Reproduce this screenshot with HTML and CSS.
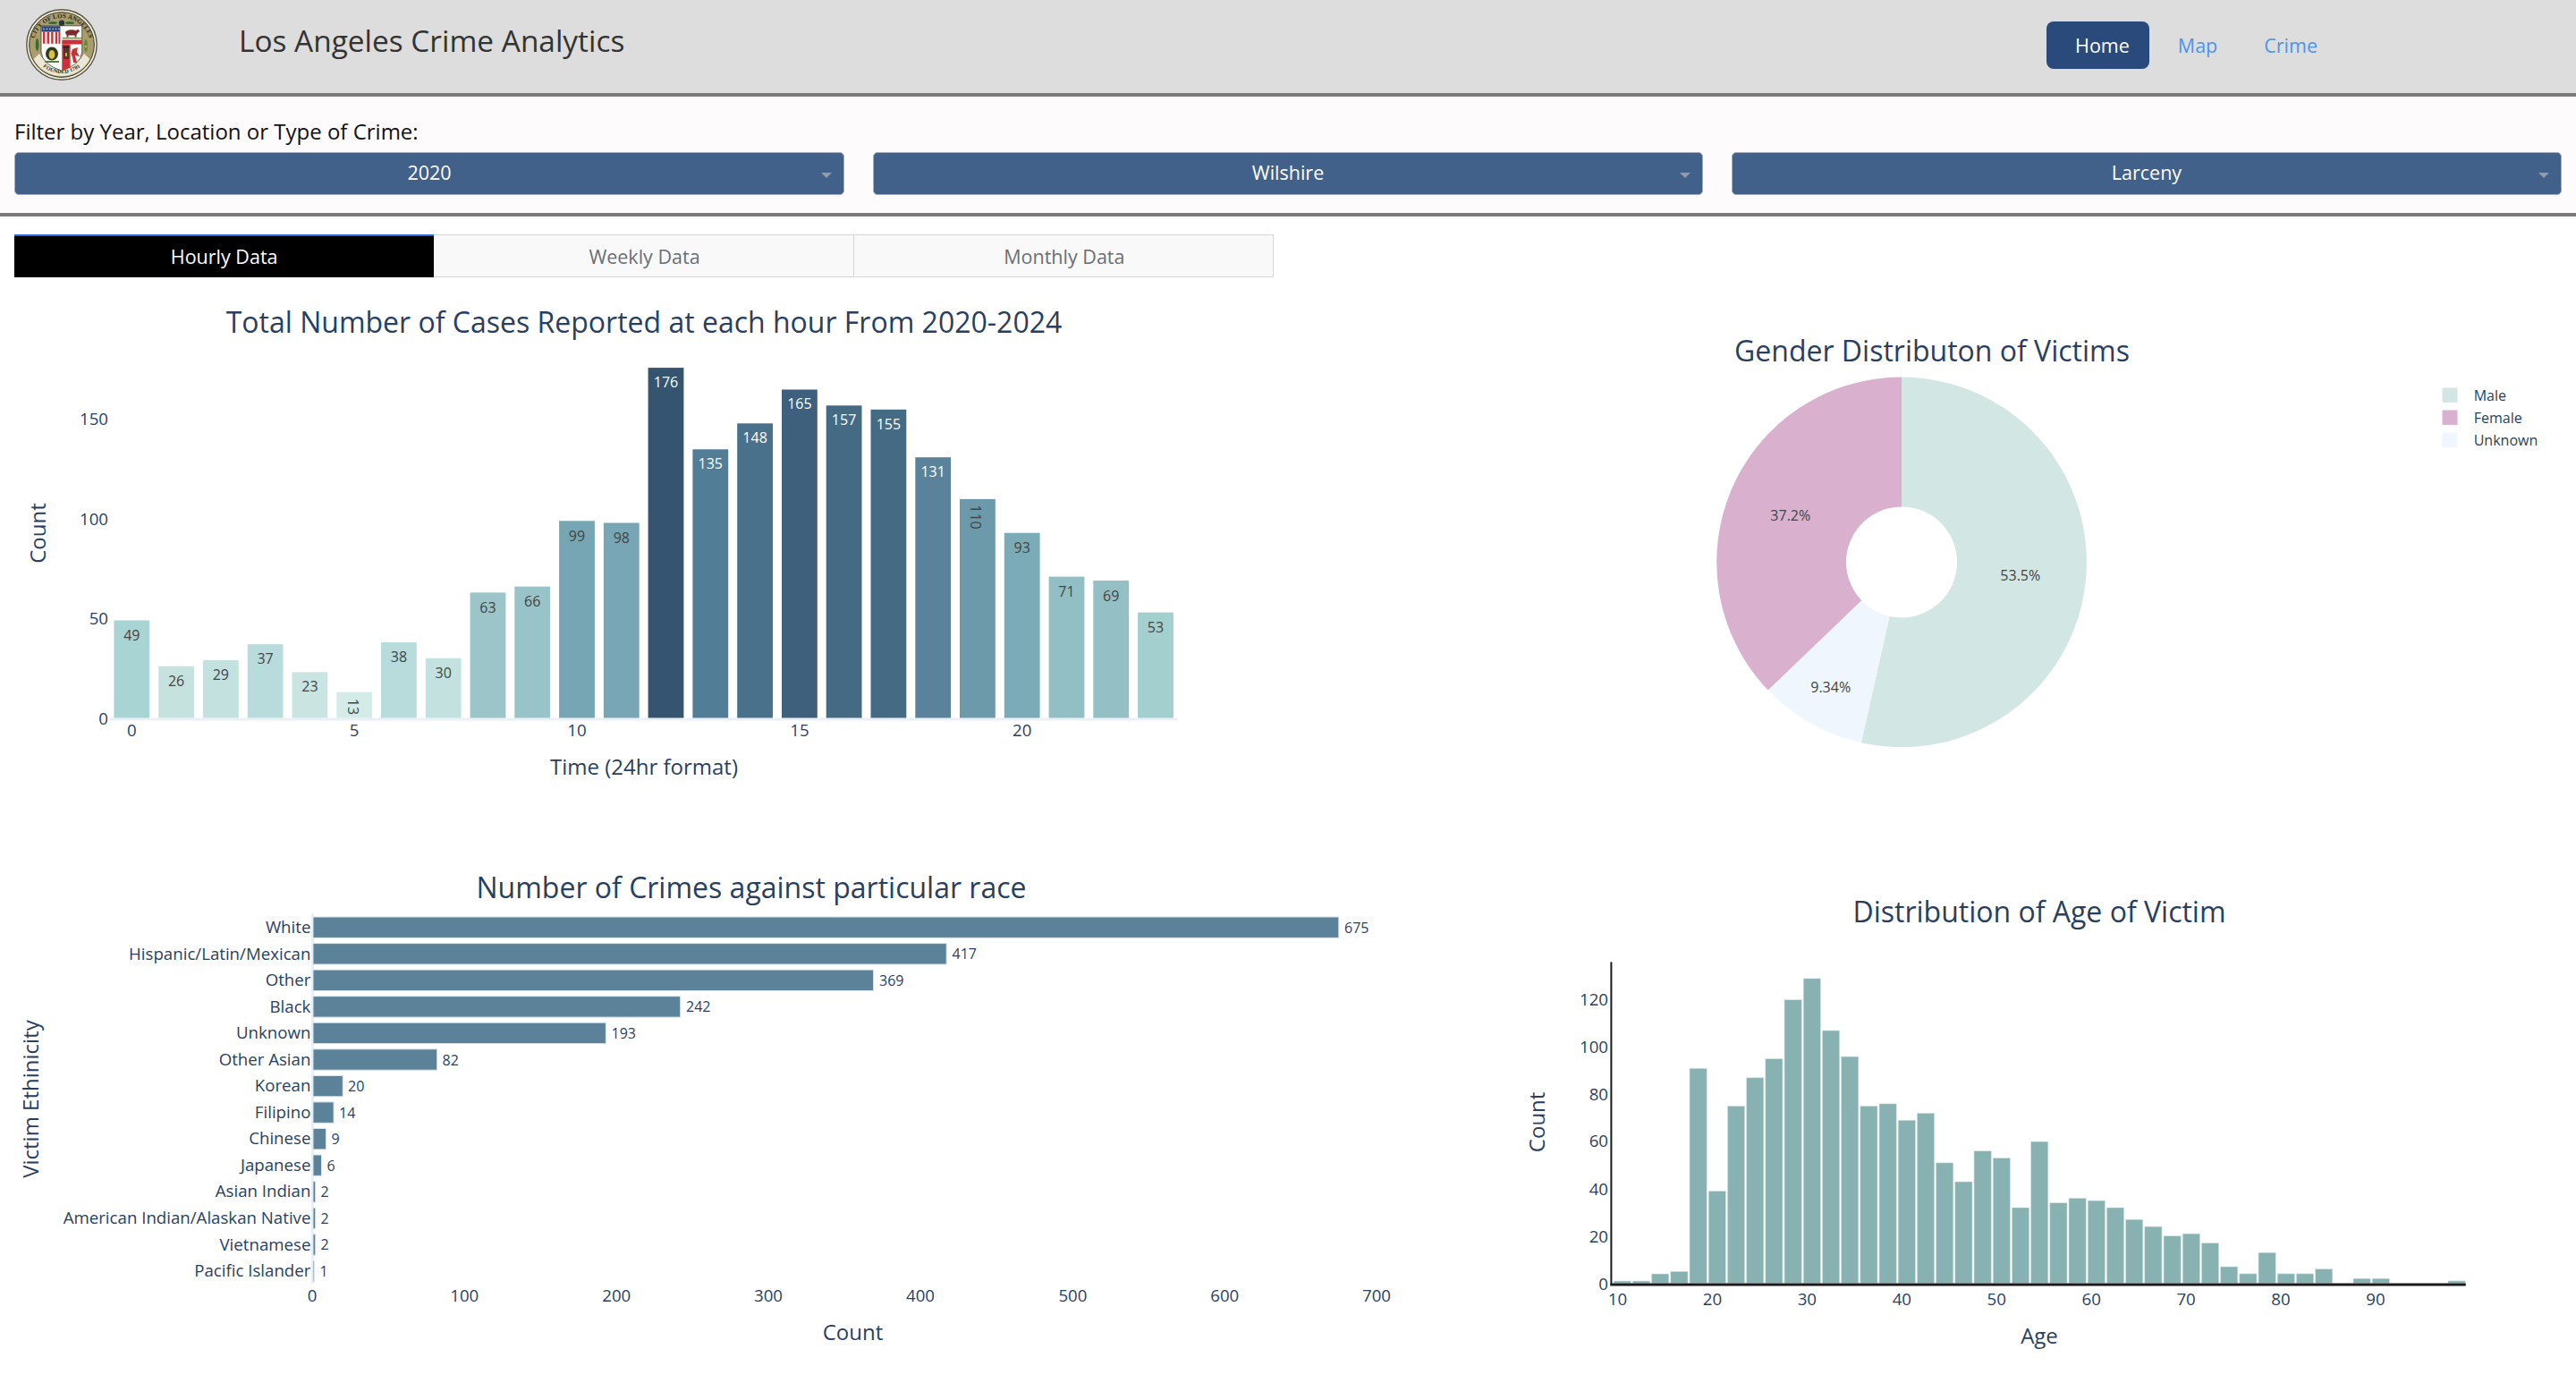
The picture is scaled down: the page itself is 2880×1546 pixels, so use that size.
FILE: index.html
```html
<!DOCTYPE html>
<html lang="en">
<head>
<meta charset="utf-8">
<title>Los Angeles Crime Analytics</title>
<link rel="stylesheet" href="styles.css">
</head>
<body>
<header class="topbar">
  <svg class="seal" viewBox="0 0 80 80" role="img" aria-label="Seal of the City of Los Angeles">
    <defs>
      <path id="seal-top" d="M8 42 A32 32 0 0 1 72 42"/>
      <path id="seal-bottom" d="M13 58 A33 33 0 0 0 67 58"/>
    </defs>
    <circle cx="40" cy="40" r="39.2" fill="#f4f1e6" stroke="#5c5740" stroke-width="1.4"/>
    <circle cx="40" cy="40" r="36.4" fill="#a99c6d" stroke="#3d3a2b" stroke-width="1"/>
    <text class="seal-text"><textPath href="#seal-top" startOffset="50%" text-anchor="middle">CITY OF LOS ANGELES</textPath></text>
    <path d="M8.5 56 A35.6 35.6 0 0 0 71.5 56 L65 50 A28 28 0 0 1 15 50 Z" fill="#ece7d4"/>
    <text class="seal-text seal-small"><textPath href="#seal-bottom" startOffset="50%" text-anchor="middle">FOUNDED 1781</textPath></text>
    <path d="M17 18.8 H62.7 V48 Q62 62 39.8 69 Q18 62 17 48 Z" fill="#fbfbf8" stroke="#2c2c24" stroke-width=".7"/>
    <rect x="17.4" y="19.2" width="21" height="6.4" fill="#2e4a86"/>
    <g fill="#c8323a">
      <rect x="19" y="25.6" width="2.4" height="13.2"/><rect x="23.6" y="25.6" width="2.4" height="13.2"/><rect x="28.2" y="25.6" width="2.4" height="13.2"/><rect x="32.8" y="25.6" width="2.4" height="13.2"/><rect x="36.4" y="25.6" width="2" height="13.2"/>
    </g>
    <g fill="#fff"><circle cx="20" cy="22.4" r=".7"/><circle cx="23.4" cy="22.4" r=".7"/><circle cx="26.8" cy="22.4" r=".7"/><circle cx="30.2" cy="22.4" r=".7"/><circle cx="33.6" cy="22.4" r=".7"/><circle cx="37" cy="22.4" r=".7"/></g>
    <ellipse cx="51" cy="26.4" rx="7" ry="3.2" fill="#7a2b2f"/><rect x="45.5" y="27" width="2" height="4.5" fill="#7a2b2f"/><rect x="54.5" y="27" width="2" height="4.5" fill="#7a2b2f"/><circle cx="58" cy="24.8" r="1.8" fill="#7a2b2f"/>
    <rect x="41" y="32" width="21" height="1.2" fill="#5d7f3d"/>
    <rect x="40.3" y="34.5" width="22.2" height="5" fill="#c8323a"/>
    <path d="M40.3 39.5 H49.6 V65.6 Q45 67.6 39.8 69 L40.3 69 Z" fill="#c8323a"/>
    <rect x="42" y="43" width="6" height="13" fill="#4a3a2c"/><rect x="41.4" y="41.4" width="7.2" height="2.2" fill="#2c2620"/><rect x="44" y="49" width="2" height="4" fill="#d9b23c"/>
    <ellipse cx="29" cy="50" rx="7" ry="7.5" fill="#2f3a22"/><ellipse cx="29" cy="51" rx="3.4" ry="5" fill="#d9c13c"/><path d="M21 58 H37 V60 H21 Z" fill="#5d7f3d"/>
    <path d="M52 45 L58 43 L57 48 L60 53 L55 52 L57 60 L53 60 L52 54 L50.5 50 Z" fill="#c8323a"/>
    <g fill="#3e6a34"><ellipse cx="30" cy="15.5" rx="5" ry="1.6"/><ellipse cx="49" cy="15.5" rx="5" ry="1.6"/></g>
    <circle cx="40" cy="15.8" r="3.2" fill="#28363f"/>
    <ellipse cx="12.6" cy="40" rx="1.9" ry="7" fill="#3e6a34"/><ellipse cx="67" cy="41" rx="1.9" ry="7" fill="#5d8a3a"/><circle cx="67" cy="42" r="1.3" fill="#d9b23c"/>
  </svg>
  <h1 class="brand">Los Angeles Crime Analytics</h1>
  <nav class="nav">
    <a class="nav-item nav-active" href="#">Home</a>
    <a class="nav-item" href="#">Map</a>
    <a class="nav-item" href="#">Crime</a>
  </nav>
</header>

<section class="filters">
  <p class="filters-label">Filter by Year, Location or Type of Crime:</p>
  <div class="filters-row">
    <div class="select"><span class="select-value">2020</span><span class="caret"></span></div>
    <div class="select"><span class="select-value">Wilshire</span><span class="caret"></span></div>
    <div class="select"><span class="select-value">Larceny</span><span class="caret"></span></div>
  </div>
</section>

<div class="tabs">
  <div class="tab tab-active">Hourly Data</div>
  <div class="tab">Weekly Data</div>
  <div class="tab">Monthly Data</div>
</div>

<main class="charts">
  <svg class="chart" viewBox="0 310 1680 610" role="img" aria-label="Cases by hour">
    <text class="title" x="720" y="359">Total Number of Cases Reported at each hour From 2020-2024</text>
    <g class="tick-r">
      <text x="121" y="467.5">150</text><text x="121" y="579.5">100</text><text x="121" y="690.5">50</text><text x="121" y="802.5">0</text>
    </g>
    <text class="axis-title" transform="translate(41 596) rotate(-90)">Count</text>
    <rect x="123" y="802.5" width="1194" height="3" fill="#ebf0f8"/>
    <rect x="127.4" y="693.5" width="39.8" height="109" fill="#a8d4d4"/>
    <rect x="177.2" y="744.7" width="39.8" height="57.8" fill="#c5e2df"/>
    <rect x="226.9" y="738" width="39.8" height="64.5" fill="#c2e1df"/>
    <rect x="276.7" y="720.2" width="39.8" height="82.3" fill="#b8dcdb"/>
    <rect x="326.5" y="751.3" width="39.8" height="51.2" fill="#cae5e1"/>
    <rect x="376.3" y="773.6" width="39.8" height="28.9" fill="#d5ebe7"/>
    <rect x="426" y="718" width="39.8" height="84.5" fill="#b7dcdb"/>
    <rect x="475.8" y="735.8" width="39.8" height="66.7" fill="#c2e1df"/>
    <rect x="525.6" y="662.4" width="39.8" height="140.1" fill="#9cc5ca"/>
    <rect x="575.3" y="655.7" width="39.8" height="146.8" fill="#98c3c8"/>
    <rect x="625.1" y="582.3" width="39.8" height="220.2" fill="#76a5b3"/>
    <rect x="674.9" y="584.5" width="39.8" height="218" fill="#78a6b4"/>
    <rect x="724.6" y="411.1" width="39.8" height="391.4" fill="#34546f"/>
    <rect x="774.4" y="502.3" width="39.8" height="300.2" fill="#527d97"/>
    <rect x="824.2" y="473.3" width="39.8" height="329.2" fill="#4a718c"/>
    <rect x="874" y="435.5" width="39.8" height="367" fill="#3e607c"/>
    <rect x="923.7" y="453.3" width="39.8" height="349.2" fill="#456a84"/>
    <rect x="973.5" y="457.8" width="39.8" height="344.7" fill="#456a84"/>
    <rect x="1023.3" y="511.2" width="39.8" height="291.3" fill="#5a839b"/>
    <rect x="1073" y="557.9" width="39.8" height="244.6" fill="#6c9aab"/>
    <rect x="1122.8" y="595.7" width="39.8" height="206.8" fill="#7cabb8"/>
    <rect x="1172.6" y="644.6" width="39.8" height="157.9" fill="#92bfc4"/>
    <rect x="1222.3" y="649" width="39.8" height="153.5" fill="#94c0c5"/>
    <rect x="1272.1" y="684.6" width="39.8" height="117.9" fill="#a4cfcf"/>
    <g class="bar-label">
      <text x="147.3" y="710">49</text><text x="197.1" y="761">26</text><text x="246.8" y="754">29</text><text x="296.6" y="736">37</text><text x="346.4" y="767">23</text>
      <text transform="translate(394.5 790) rotate(90)">13</text>
      <text x="445.9" y="734">38</text><text x="495.7" y="752">30</text><text x="545.5" y="679">63</text><text x="595.2" y="672">66</text><text x="645" y="599">99</text><text x="694.8" y="601">98</text>
      <text class="on-dark" x="744.5" y="427">176</text><text class="on-dark" x="794.3" y="518">135</text><text class="on-dark" x="844.1" y="489">148</text><text class="on-dark" x="893.9" y="451">165</text><text class="on-dark" x="943.6" y="469">157</text><text class="on-dark" x="993.4" y="474">155</text><text class="on-dark" x="1043.2" y="527">131</text>
      <text transform="translate(1091 578) rotate(90)">110</text>
      <text x="1142.7" y="612">93</text><text x="1192.5" y="661">71</text><text x="1242.2" y="666">69</text><text x="1292" y="701">53</text>
    </g>
    <g class="tick-m">
      <text x="147.3" y="815.5">0</text><text x="396.2" y="815.5">5</text><text x="645" y="815.5">10</text><text x="893.9" y="815.5">15</text><text x="1142.7" y="815.5">20</text>
    </g>
    <text class="axis-title" x="720" y="856">Time (24hr format)</text>
  </svg>

  <svg class="chart" viewBox="1680 310 1200 610" role="img" aria-label="Gender distribution">
    <text class="title" x="2160" y="391">Gender Distributon of Victims</text>
    <path d="M2126 421.6 A206.8 206.8 0 1 1 2080.9 830.2 L2112.5 688.9 A62 62 0 1 0 2126 566.4 Z" fill="#d2e6e3"/>
    <path d="M2080.9 830.2 A206.8 206.8 0 0 1 1976.7 771.5 L2081.2 671.3 A62 62 0 0 0 2112.5 688.9 Z" fill="#f0f6fd"/>
    <path d="M1976.7 771.5 A206.8 206.8 0 0 1 2126 421.6 L2126 566.4 A62 62 0 0 0 2081.2 671.3 Z" fill="#d9b1ce"/>
    <g class="bar-label">
      <text x="2258.8" y="643">53.5%</text><text x="2001.8" y="575.5">37.2%</text><text x="2046.7" y="768">9.34%</text>
    </g>
    <rect x="2730.5" y="433.5" width="17" height="16.4" fill="#d2e6e3"/>
    <rect x="2730.5" y="458.5" width="17" height="16.4" fill="#d9b1ce"/>
    <rect x="2730.5" y="483.7" width="17" height="16.4" fill="#f0f6fd"/>
    <g class="legend">
      <text x="2765.7" y="442">Male</text><text x="2765.7" y="466.5">Female</text><text x="2765.7" y="492">Unknown</text>
    </g>
  </svg>

  <svg class="chart" viewBox="0 920 1680 626" role="img" aria-label="Crimes by race">
    <text class="title" x="840" y="991">Number of Crimes against particular race</text>
    <rect x="348" y="1021" width="3" height="414" fill="#ebf0f8"/>
    <g class="hbars" fill="#5c8299">
      <rect x="350" y="1025" width="1146.8" height="23.4"/>
      <rect x="350" y="1054.6" width="708.2" height="23.4"/>
      <rect x="350" y="1084.1" width="626.6" height="23.4"/>
      <rect x="350" y="1113.7" width="410.7" height="23.4"/>
      <rect x="350" y="1143.2" width="327.4" height="23.4"/>
      <rect x="350" y="1172.8" width="138.7" height="23.4"/>
      <rect x="350" y="1202.4" width="33.3" height="23.4"/>
      <rect x="350" y="1231.9" width="23.1" height="23.4"/>
      <rect x="350" y="1261.5" width="14.6" height="23.4"/>
      <rect x="350" y="1291" width="9.5" height="23.4"/>
      <rect x="350" y="1320.6" width="2.7" height="23.4"/>
      <rect x="350" y="1350.2" width="2.7" height="23.4"/>
      <rect x="350" y="1379.7" width="2.7" height="23.4"/>
      <rect x="350" y="1409.3" width="1.2" height="23.4"/>
    </g>
    <g class="tick-r">
      <text x="347.4" y="1035.5">White</text><text x="347.4" y="1065">Hispanic/Latin/Mexican</text><text x="347.4" y="1094.5">Other</text><text x="347.4" y="1124">Black</text><text x="347.4" y="1153.5">Unknown</text><text x="347.4" y="1183">Other Asian</text><text x="347.4" y="1212.5">Korean</text><text x="347.4" y="1242">Filipino</text><text x="347.4" y="1271.5">Chinese</text><text x="347.4" y="1301">Japanese</text><text x="347.4" y="1330.5">Asian Indian</text><text x="347.4" y="1360">American Indian/Alaskan Native</text><text x="347.4" y="1390">Vietnamese</text><text x="347.4" y="1419.5">Pacific Islander</text>
    </g>
    <g class="value-label">
      <text x="1503" y="1037">675</text><text x="1064.5" y="1066.3">417</text><text x="983" y="1096">369</text><text x="767" y="1125.4">242</text><text x="683.5" y="1155">193</text><text x="494.5" y="1184.5">82</text><text x="389" y="1214.1">20</text><text x="379" y="1243.6">14</text><text x="370.5" y="1273.2">9</text><text x="365.5" y="1302.7">6</text><text x="358.5" y="1332.3">2</text><text x="358.5" y="1361.9">2</text><text x="358.5" y="1391.4">2</text><text x="357.5" y="1421">1</text>
    </g>
    <g class="tick-m">
      <text x="349" y="1447.5">0</text><text x="519.3" y="1447.5">100</text><text x="689.3" y="1447.5">200</text><text x="859" y="1447.5">300</text><text x="1029" y="1447.5">400</text><text x="1199.4" y="1447.5">500</text><text x="1369.3" y="1447.5">600</text><text x="1539" y="1447.5">700</text>
    </g>
    <text class="axis-title" transform="translate(33.5 1228.6) rotate(-90)">Victim Ethinicity</text>
    <text class="axis-title" x="953.5" y="1488.5">Count</text>
  </svg>

  <svg class="chart" viewBox="1680 920 1200 626" role="img" aria-label="Age distribution">
    <text class="title" x="2280" y="1018.5">Distribution of Age of Victim</text>
    <g class="hist" fill="#88b1b1">
      <rect x="1804.2" y="1432" width="19.2" height="2.6"/><rect x="1825.4" y="1432" width="19.2" height="2.6"/><rect x="1846.6" y="1424" width="19.2" height="10.6"/><rect x="1867.8" y="1421.3" width="19.2" height="13.2"/>
      <rect x="1889" y="1194.3" width="19.2" height="240.2"/><rect x="1910.2" y="1331.5" width="19.2" height="103"/><rect x="1931.4" y="1236.5" width="19.2" height="198"/><rect x="1952.6" y="1204.8" width="19.2" height="229.7"/>
      <rect x="1973.8" y="1183.7" width="19.2" height="250.8"/><rect x="1995" y="1117.7" width="19.2" height="316.8"/><rect x="2016.2" y="1093.9" width="19.2" height="340.6"/><rect x="2037.4" y="1152" width="19.2" height="282.5"/>
      <rect x="2058.6" y="1181.1" width="19.2" height="253.4"/><rect x="2079.8" y="1236.5" width="19.2" height="198"/><rect x="2101" y="1233.9" width="19.2" height="200.6"/><rect x="2122.2" y="1252.3" width="19.2" height="182.2"/>
      <rect x="2143.4" y="1244.4" width="19.2" height="190.1"/><rect x="2164.6" y="1299.9" width="19.2" height="134.6"/><rect x="2185.8" y="1321" width="19.2" height="113.5"/><rect x="2207" y="1286.7" width="19.2" height="147.8"/>
      <rect x="2228.2" y="1294.6" width="19.2" height="139.9"/><rect x="2249.4" y="1350" width="19.2" height="84.5"/><rect x="2270.6" y="1276.1" width="19.2" height="158.4"/><rect x="2291.8" y="1344.7" width="19.2" height="89.8"/>
      <rect x="2313" y="1339.5" width="19.2" height="95"/><rect x="2334.2" y="1342.1" width="19.2" height="92.4"/><rect x="2355.4" y="1350" width="19.2" height="84.5"/><rect x="2376.6" y="1363.2" width="19.2" height="71.3"/>
      <rect x="2397.8" y="1371.1" width="19.2" height="63.4"/><rect x="2419" y="1381.7" width="19.2" height="52.8"/><rect x="2440.2" y="1379.1" width="19.2" height="55.4"/><rect x="2461.4" y="1389.6" width="19.2" height="44.9"/>
      <rect x="2482.6" y="1416" width="19.2" height="18.5"/><rect x="2503.8" y="1423.9" width="19.2" height="10.6"/><rect x="2525" y="1400.2" width="19.2" height="34.3"/><rect x="2546.2" y="1423.9" width="19.2" height="10.6"/>
      <rect x="2567.4" y="1423.9" width="19.2" height="10.6"/><rect x="2588.6" y="1418.7" width="19.2" height="15.8"/><rect x="2631" y="1429.2" width="19.2" height="5.3"/><rect x="2652.2" y="1429.2" width="19.2" height="5.3"/><rect x="2737" y="1431.9" width="19.2" height="2.6"/>
    </g>
    <rect x="1800.4" y="1075.4" width="2" height="361.6" fill="#1a1a1a"/>
    <rect x="1800.4" y="1434.5" width="956.4" height="3" fill="#1a1a1a"/>
    <g class="tick-r">
      <text x="1798" y="1116.5">120</text><text x="1798" y="1169">100</text><text x="1798" y="1222.5">80</text><text x="1798" y="1274.5">60</text><text x="1798" y="1328">40</text><text x="1798" y="1381.5">20</text><text x="1798" y="1434">0</text>
    </g>
    <g class="tick-m">
      <text x="1808.4" y="1451.5">10</text><text x="1914.4" y="1451.5">20</text><text x="2020.3" y="1451.5">30</text><text x="2126.3" y="1451.5">40</text><text x="2232.2" y="1451.5">50</text><text x="2338.2" y="1451.5">60</text><text x="2444.1" y="1451.5">70</text><text x="2550" y="1451.5">80</text><text x="2656" y="1451.5">90</text>
    </g>
    <text class="axis-title" transform="translate(1717 1254.4) rotate(-90)">Count</text>
    <text class="axis-title" x="2280" y="1492">Age</text>
  </svg>
</main>
</body>
</html>
```
FILE: styles.css
```css
* { box-sizing: border-box; }
html, body { margin: 0; padding: 0; }
body {
  width: 2880px;
  height: 1546px;
  overflow: hidden;
  background: #fff;
  font-family: "Open Sans", "Liberation Sans", sans-serif;
  color: #111;
}

/* Header */
.topbar {
  display: flex;
  align-items: center;
  height: 108px;
  background: #dddddd;
  border-bottom: 4px solid #7a7a7a;
  padding: 0 289px 0 29px;
}
.seal { width: 80px; height: 80px; flex: none; margin-right: 158px; margin-bottom: 4px; }
.seal-text { font: 700 7px "Liberation Serif", serif; fill: #25231a; letter-spacing: .15px; }
.seal-small { font-size: 6px; }
.brand { margin: 0 0 14px; font-size: 33.4px; font-weight: 400; color: #333; line-height: 1.2; }
.nav { display: flex; align-items: center; margin-left: auto; margin-top: -4px; }
.nav-item { font-size: 21.5px; line-height: 53px; height: 53px; color: #4c93ee; text-decoration: none; margin-left: 52px; }
.nav-item:nth-child(2) { margin-left: 32px; }
.nav-active { background: #2a4a7c; color: #fff; border-radius: 8px; padding: 0 22px 0 32px; margin-left: 0; }

/* Filters */
.filters {
  height: 134px;
  padding: 16px 16px 0;
  background: #fdfbfc;
  border-bottom: 4px solid #7a7a7a;
}
.filters-label { margin: 0; font-size: 24px; line-height: 46px; color: #111; }
.filters-row { display: grid; grid-template-columns: repeat(3, 1fr); gap: 32px; }
.select {
  display: flex;
  align-items: center;
  justify-content: center;
  position: relative;
  height: 48px;
  padding-bottom: 3px;
  background: #41608a;
  border: 1px solid #a3afc0;
  border-radius: 5px;
  color: #fff;
  font-size: 21.5px;
}
.caret {
  position: absolute;
  right: 13px;
  top: 22px;
  border-left: 6px solid transparent;
  border-right: 6px solid transparent;
  border-top: 6.5px solid #949aa3;
}

/* Tabs */
.tabs { display: grid; grid-template-columns: repeat(3, 1fr); width: 1408px; height: 48px; margin: 20px 0 0 16px; }
.tab {
  display: flex;
  align-items: center;
  justify-content: center;
  padding-left: 2px;
  background: #f9f9f9;
  border: 1px solid #d6d6d6;
  border-left: 0;
  color: #6a6f75;
  font-size: 21.5px;
}
.tab-active { background: #000; color: #fff; border: 0; border-top: 2px solid #2d68e0; padding-bottom: 2px; padding-left: 0; }

/* Charts */
.charts { display: grid; grid-template-columns: 1680px 1200px; grid-template-rows: 610px 626px; }
.chart { display: block; width: 100%; height: 100%; }
.chart text { dominant-baseline: central; font-family: "Open Sans", "Liberation Sans", sans-serif; }
.title { font-size: 32px; fill: #2a3f5f; text-anchor: middle; }
.axis-title { font-size: 24px; fill: #2a3f5f; text-anchor: middle; }
.tick-r text { font-size: 18.67px; fill: #2a3f5f; text-anchor: end; }
.tick-m text { font-size: 18.67px; fill: #2a3f5f; text-anchor: middle; }
.bar-label text { font-size: 16px; fill: #444; text-anchor: middle; }
.bar-label .on-dark { fill: #fff; }
.value-label text { font-size: 16px; fill: #2a3f5f; }
.legend text { font-size: 16px; fill: #2a3f5f; }
.hbars rect { stroke: #dbe5ea; stroke-width: 1; }
.hist rect { stroke: #d2e3e2; stroke-width: .6; }
```
